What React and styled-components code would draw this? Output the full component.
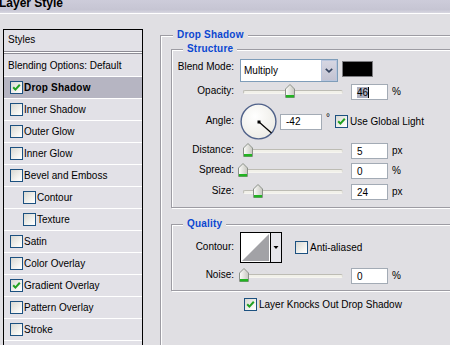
import React from 'react';
import styled, { createGlobalStyle } from 'styled-components';

const GlobalStyle = createGlobalStyle`
  html, body { margin: 0; padding: 0; background: #e0dfe3; }
  body {
    font-family: "Liberation Sans", Arial, sans-serif;
    font-size: 10px;
    color: #000;
  }
`;

const Window = styled.div`
  width: 450px;
  height: 345px;
  overflow: hidden;
  background: #e0dfe3;
`;

const TitleBar = styled.div`
  height: 13px;
  overflow: hidden;
  background: linear-gradient(#cdccda, #c6c5d3 75%, #d8d7e1);
  border-bottom: 1px solid #fff;
`;

const TitleText = styled.div`
  margin: -3px 0 0 -1px;
  font-size: 12px;
  line-height: 12px;
  font-weight: bold;
`;

const Body = styled.div`
  display: flex;
  align-items: stretch;
  height: 331px;
  padding-top: 15px;
  box-sizing: border-box;
`;

/* left list of effects */
const StylesPanel = styled.div`
  flex: none;
  width: 140px;
  margin-left: 3px;
  box-sizing: border-box;
  border: 1px solid #000;
  border-bottom: 0;
  background: #e2e1e7;
`;

const PanelHeader = styled.div`
  height: 21px;
  line-height: 20px;
  padding-left: 4px;
`;

const PanelRule = styled.div`
  height: 1px;
  background: #fff;
  border-top: 1px solid #8d8c95;
  border-bottom: 1px solid #8d8c95;
`;

const StyleRow = styled.div`
  display: flex;
  align-items: center;
  gap: 1px;
  height: ${p => (p.$tall ? 22 : 21)}px;
  padding-left: ${p => p.$indent}px;
  border-bottom: 1px solid #fff;
  background: ${p => (p.$active ? '#b6b5c2' : 'transparent')};
  font-weight: ${p => (p.$active ? 'bold' : 'normal')};
  letter-spacing: ${p => (p.$active ? '0.2px' : '0')};
`;

/* checkbox */
const Box = styled.span`
  flex: none;
  display: inline-flex;
  align-items: center;
  justify-content: center;
  width: 13px;
  height: 13px;
  box-sizing: border-box;
  border: 1px solid #1c5180;
  background: linear-gradient(135deg, #d8d8d2, #f6f6f3 70%, #fff);
`;

const Check = ({ on }) => (
  <Box>
    {on && (
      <svg width="9" height="9" viewBox="0 0 9 9">
        <path d="M1.2 4.2 L3.4 6.6 L7.8 1.8" fill="none" stroke="#21a121" strokeWidth="2" />
      </svg>
    )}
  </Box>
);

/* right settings */
const Settings = styled.div`
  flex: none;
  width: 330px;
  margin-left: 17px;
`;

const Group = styled.fieldset`
  margin: ${p => p.$top || 0}px 0 0;
  padding: ${p => p.$pad};
  min-width: 0;
  border: 1px solid #9d9ca3;
  box-shadow: inset 1px 1px 0 #fff, 1px 1px 0 #fff;
`;

const Legend = styled.legend`
  margin-left: ${p => p.$offset}px;
  padding: 0 4px;
  line-height: 12px;
  font-weight: bold;
  letter-spacing: 0.2px;
  color: #0b47d1;
  background: #e0dfe3;
`;

const Row = styled.div`
  display: flex;
  align-items: ${p => p.$align || 'center'};
  height: ${p => p.$h}px;
  margin-top: ${p => p.$mt}px;
  margin-left: ${p => p.$ml || 0}px;
`;

const Label = styled.span`
  flex: none;
  width: 62px;
  text-align: right;
  line-height: 12px;
  margin-right: ${p => p.$gap}px;
  margin-bottom: ${p => (p.$top ? 0 : 2)}px;
  padding-top: ${p => (p.$top ? 2 : 0)}px;
`;

const Select = styled.div`
  flex: none;
  display: flex;
  align-items: center;
  width: 98px;
  height: 23px;
  box-sizing: border-box;
  border: 1px solid #7f9db9;
  background: #fff;
  padding-left: 3px;
  font-size: 10px;
`;

const SelectValue = styled.span`
  flex: 1;
`;

const DropButton = styled.span`
  display: flex;
  align-items: center;
  justify-content: center;
  width: 16px;
  height: 21px;
  box-sizing: border-box;
  border: 1px solid #b9c6de;
  background: linear-gradient(#d6d6e2, #c3c3d2);
`;

const Swatch = styled.span`
  flex: none;
  width: 31px;
  height: 16px;
  margin: 2px 0 0 4px;
  box-sizing: border-box;
  border: 1px solid #7c7c80;
  background: ${p => p.$color};
`;

const SliderBox = styled.div`
  position: relative;
  flex: none;
  width: 105px;
  height: 16px;
`;

const Track = styled.div`
  height: 2px;
  margin: 6px 0 0 5px;
  border: 1px solid;
  border-color: #bdbcb4 #dcdbd4 #f6f5f0 #bdbcb4;
  border-radius: 2px;
  background: #f1f0e9;
`;

const Thumb = styled.svg`
  position: absolute;
  top: 0;
`;

const Slider = ({ at }) => (
  <SliderBox>
    <Track />
    <Thumb width="10" height="14" viewBox="0 0 10 14" style={{ left: at }}>
      <defs>
        <linearGradient id="thumbFill" x1="0" x2="1">
          <stop offset="0" stopColor="#fdfdfb" />
          <stop offset="1" stopColor="#c7c7c0" />
        </linearGradient>
      </defs>
      <path d="M0.5 5 L5 0.5 L9.5 5 V13.5 H0.5 Z" fill="url(#thumbFill)" stroke="#8b9189" />
      <rect x="1" y="11" width="8" height="2.5" fill="#22b322" />
    </Thumb>
  </SliderBox>
);

const NumField = styled.div`
  flex: none;
  display: flex;
  align-items: center;
  width: ${p => p.$w || 37}px;
  height: 16px;
  margin-left: ${p => p.$ml}px;
  box-sizing: border-box;
  border: 1px solid #a3abb5;
  background: #fff;
  padding-left: 5px;
`;

const Picked = styled.span`
  background: #adafbf;
  border-right: 1px solid #000;
  line-height: 11px;
`;

const Unit = styled.span`
  margin-left: 4px;
  margin-bottom: ${p => (p.$raised ? 8 : 2)}px;
  margin-right: ${p => p.$mr || 0}px;
`;

const CheckText = styled.span`
  margin-left: 2px;
  margin-bottom: 1px;
`;

const Dial = styled.svg`
  flex: none;
`;

const Contour = styled.svg`
  flex: none;
  margin-right: 13px;
`;

const effects = [
  { name: 'Drop Shadow', on: true, active: true },
  { name: 'Inner Shadow' },
  { name: 'Outer Glow' },
  { name: 'Inner Glow' },
  { name: 'Bevel and Emboss' },
  { name: 'Contour', sub: true },
  { name: 'Texture', sub: true },
  { name: 'Satin' },
  { name: 'Color Overlay' },
  { name: 'Gradient Overlay', on: true },
  { name: 'Pattern Overlay' },
  { name: 'Stroke' },
];

export default function App() {
  return (
    <Window>
      <GlobalStyle />
      <TitleBar>
        <TitleText>Layer Style</TitleText>
      </TitleBar>
      <Body>
        <StylesPanel>
          <PanelHeader>Styles</PanelHeader>
          <PanelRule />
          <StyleRow $tall $indent={4}>Blending Options: Default</StyleRow>
          {effects.map(e => (
            <StyleRow key={e.name} $indent={e.sub ? 19 : 6} $active={e.active}>
              <Check on={e.on} />
              <span>{e.name}</span>
            </StyleRow>
          ))}
        </StylesPanel>

        <Settings>
          <Group $pad="2px 0 60px 10px">
            <Legend $offset={2}>Drop Shadow</Legend>

            <Group $pad="0 0 7px 0">
              <Legend $offset={11}>Structure</Legend>

              <Row $h={23} $mt={4} $align="flex-start">
                <Label $gap={6} $top>Blend Mode:</Label>
                <Select>
                  <SelectValue>Multiply</SelectValue>
                  <DropButton>
                    <svg width="8" height="5" viewBox="0 0 8 5">
                      <polyline points="0.8,0.8 4,3.8 7.2,0.8" fill="none" stroke="#34435f" strokeWidth="1.7" />
                    </svg>
                  </DropButton>
                </Select>
                <Swatch $color="#000" />
              </Row>

              <Row $h={16} $mt={2}>
                <Label $gap={4}>Opacity:</Label>
                <Slider at={47} />
                <NumField $ml={8}>
                  <Picked>46</Picked>
                </NumField>
                <Unit>%</Unit>
              </Row>

              <Row $h={37} $mt={3}>
                <Label $gap={6}>Angle:</Label>
                <Dial width="37" height="37" viewBox="0 0 37 37">
                  <defs>
                    <radialGradient id="dialFill" cx="0.4" cy="0.35" r="0.7">
                      <stop offset="0" stopColor="#ffffff" />
                      <stop offset="1" stopColor="#ecebe5" />
                    </radialGradient>
                  </defs>
                  <circle cx="18.5" cy="18.5" r="17.4" fill="url(#dialFill)" stroke="#50628a" strokeWidth="1.4" />
                  <line x1="19" y1="19" x2="31.5" y2="30" stroke="#000" strokeWidth="1.2" />
                  <rect x="17.5" y="17.5" width="3" height="3" fill="#000" />
                </Dial>
                <NumField $ml={3} $w={42}>-42</NumField>
                <Unit $raised $mr={5}>°</Unit>
                <Check on />
                <CheckText>Use Global Light</CheckText>
              </Row>

              <Row $h={16} $mt={3}>
                <Label $gap={4}>Distance:</Label>
                <Slider at={5} />
                <NumField $ml={8}>5</NumField>
                <Unit>px</Unit>
              </Row>

              <Row $h={16} $mt={4}>
                <Label $gap={4}>Spread:</Label>
                <Slider at={0} />
                <NumField $ml={8}>0</NumField>
                <Unit>%</Unit>
              </Row>

              <Row $h={16} $mt={5}>
                <Label $gap={4}>Size:</Label>
                <Slider at={15} />
                <NumField $ml={8}>24</NumField>
                <Unit>px</Unit>
              </Row>
            </Group>

            <Group $top={10} $pad="0 0 6px 0">
              <Legend $offset={11}>Quality</Legend>

              <Row $h={31} $mt={2}>
                <Label $gap={6}>Contour:</Label>
                <Contour width="42" height="31" viewBox="0 0 42 31">
                  <rect x="0.5" y="0.5" width="41" height="30" fill="#e6e6ec" stroke="#000" />
                  <rect x="1" y="1" width="29" height="29" fill="#fff" />
                  <polygon points="2,29 29,2 29,29" fill="#a2a2a6" />
                  <line x1="30.5" y1="1" x2="30.5" y2="30" stroke="#000" />
                  <polygon points="33.5,14 38.5,14 36,17" fill="#000" />
                </Contour>
                <Check />
                <CheckText>Anti-aliased</CheckText>
              </Row>

              <Row $h={16} $mt={5}>
                <Label $gap={4}>Noise:</Label>
                <Slider at={1} />
                <NumField $ml={8}>0</NumField>
                <Unit>%</Unit>
              </Row>
            </Group>

            <Row $h={13} $mt={7} $ml={73}>
              <Check on />
              <CheckText>Layer Knocks Out Drop Shadow</CheckText>
            </Row>
          </Group>
        </Settings>
      </Body>
    </Window>
  );
}
